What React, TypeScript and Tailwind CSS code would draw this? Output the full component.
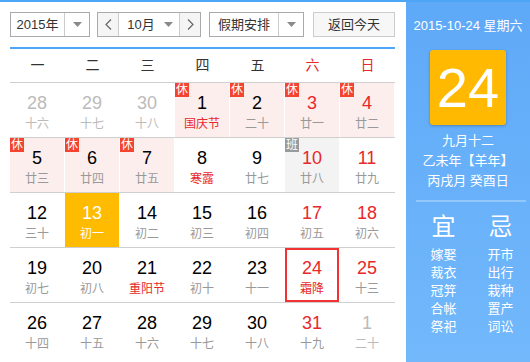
import React from "react";

type Day = {
  n: number;
  lunar: string;
  other?: boolean;
  weekend?: boolean;
  festival?: boolean;
  badge?: "休" | "班";
  today?: boolean;
  selected?: boolean;
};

const weeks: Day[][] = [
  [
    { n: 28, lunar: "十六", other: true },
    { n: 29, lunar: "十七", other: true },
    { n: 30, lunar: "十八", other: true },
    { n: 1, lunar: "国庆节", festival: true, badge: "休" },
    { n: 2, lunar: "二十", badge: "休" },
    { n: 3, lunar: "廿一", weekend: true, badge: "休" },
    { n: 4, lunar: "廿二", weekend: true, badge: "休" },
  ],
  [
    { n: 5, lunar: "廿三", badge: "休" },
    { n: 6, lunar: "廿四", badge: "休" },
    { n: 7, lunar: "廿五", badge: "休" },
    { n: 8, lunar: "寒露", festival: true },
    { n: 9, lunar: "廿七" },
    { n: 10, lunar: "廿八", weekend: true, badge: "班" },
    { n: 11, lunar: "廿九", weekend: true },
  ],
  [
    { n: 12, lunar: "三十" },
    { n: 13, lunar: "初一", today: true },
    { n: 14, lunar: "初二" },
    { n: 15, lunar: "初三" },
    { n: 16, lunar: "初四" },
    { n: 17, lunar: "初五", weekend: true },
    { n: 18, lunar: "初六", weekend: true },
  ],
  [
    { n: 19, lunar: "初七" },
    { n: 20, lunar: "初八" },
    { n: 21, lunar: "重阳节", festival: true },
    { n: 22, lunar: "初十" },
    { n: 23, lunar: "十一" },
    { n: 24, lunar: "霜降", weekend: true, festival: true, selected: true },
    { n: 25, lunar: "十三", weekend: true },
  ],
  [
    { n: 26, lunar: "十四" },
    { n: 27, lunar: "十五" },
    { n: 28, lunar: "十六" },
    { n: 29, lunar: "十七" },
    { n: 30, lunar: "十八" },
    { n: 31, lunar: "十九", weekend: true },
    { n: 1, lunar: "二十", other: true },
  ],
];

const yi = ["嫁娶", "裁衣", "冠笄", "合帐", "祭祀"];
const ji = ["开市", "出行", "栽种", "置产", "词讼"];

function Caret() {
  return (
    <svg width="9" height="5" viewBox="0 0 9 5">
      <path d="M0 0h9L4.5 5z" fill="#8a8a8a" />
    </svg>
  );
}

function Chevron({ dir }: { dir: "l" | "r" }) {
  return (
    <svg width="7" height="11" viewBox="0 0 7 11">
      <polyline
        points={dir === "l" ? "6,0.5 1,5.5 6,10.5" : "1,0.5 6,5.5 1,10.5"}
        fill="none"
        stroke="#666"
        strokeWidth="1.2"
      />
    </svg>
  );
}

function Cell({ d }: { d: Day }) {
  let bg = "";
  if (d.today) bg = "bg-[#ffbb00]";
  else if (d.badge === "休") bg = "bg-[#fdeeee]";
  else if (d.badge === "班") bg = "bg-[#f3f3f3]";

  let numColor = "text-[#000]";
  let lunarColor = "text-[#999]";
  if (d.other) {
    numColor = "text-[#bbb]";
    lunarColor = "text-[#bbb]";
  } else if (d.weekend) numColor = "text-[#e8282a]";
  if (d.festival) lunarColor = "text-[#e8282a]";
  if (d.today) {
    numColor = "text-white";
    lunarColor = "text-white";
  }

  return (
    <div className="w-[55px] h-[54px] pr-[1px]">
      <div
        className={`relative h-full flex flex-col items-center ${bg} ${
          d.selected ? "border-2 border-[#f33333] pt-[8px]" : "pt-[10px]"
        }`}
      >
        {d.badge && (
          <div
            className={`absolute top-0 left-0 w-[14px] h-[14px] text-[12px] leading-[14px] text-white text-center ${
              d.badge === "休" ? "bg-[#f4432f]" : "bg-[#9a9a9a]"
            }`}
          >
            {d.badge}
          </div>
        )}
        <div className={`text-[18px] leading-[20px] ${numColor}`}>{d.n}</div>
        <div className={`text-[12px] leading-[16px] mt-[3px] ${lunarColor}`}>{d.lunar}</div>
      </div>
    </div>
  );
}

export default function App() {
  return (
    <div
      className="w-[530px] h-[362px] flex border-t-2 border-[#4ea6f6] bg-white overflow-hidden"
      style={{ fontFamily: '"Liberation Sans", "Noto Sans CJK SC", sans-serif' }}
    >
      <div className="w-[406px] pl-[10px] pr-[11px]">
        {/* controls */}
        <div className="mt-[10px] h-[25px] flex text-[13px] text-[#333]">
          <div className="w-[80px] h-full flex border border-[#aaa]">
            <div className="w-[54px] flex items-center justify-center border-r border-[#ccc]">2015年</div>
            <div className="flex-1 flex items-center justify-center">
              <Caret />
            </div>
          </div>
          <div className="ml-[7px] w-[104px] h-full flex border border-[#aaa]">
            <div className="w-[21px] flex items-center justify-center bg-[#f5f5f5] border-r border-[#ccc]">
              <Chevron dir="l" />
            </div>
            <div className="flex-1 flex items-center justify-center gap-[9px] pl-[2px]">
              <span>10月</span>
              <Caret />
            </div>
            <div className="w-[21px] flex items-center justify-center bg-[#f5f5f5] border-l border-[#ccc]">
              <Chevron dir="r" />
            </div>
          </div>
          <div className="ml-[8px] w-[95px] h-full flex border border-[#aaa]">
            <div className="w-[69px] flex items-center justify-center border-r border-[#ccc]">假期安排</div>
            <div className="flex-1 flex items-center justify-center">
              <Caret />
            </div>
          </div>
          <div className="ml-[9px] w-[82px] h-full flex items-center justify-center border border-[#ccc] bg-[#f7f7f7]">
            返回今天
          </div>
        </div>

        <div className="mt-[10px] h-[2px] bg-[#4ea6f6]" />

        {/* week header */}
        <div className="h-[34px] grid grid-cols-7 border-b border-[#cfcfcf] text-[14px] text-[#333]">
          {["一", "二", "三", "四", "五", "六", "日"].map((w, i) => (
            <div
              key={w}
              className={`flex items-center justify-center ${i >= 5 ? "text-[#e8282a]" : ""}`}
            >
              {w}
            </div>
          ))}
        </div>

        {weeks.map((row, ri) => (
          <div
            key={ri}
            className={`flex ${ri < weeks.length - 1 ? "border-b border-[#cfcfcf]" : ""}`}
          >
            {row.map((d, ci) => (
              <Cell key={ci} d={d} />
            ))}
          </div>
        ))}
      </div>

      {/* side panel */}
      <div className="flex-1 flex flex-col items-center bg-gradient-to-b from-[#5ea9f8] to-[#72b8fb] text-white">
        <div className="mt-[16px] text-[13px] leading-[16px]">2015-10-24 星期六</div>
        <div className="mt-[16px] w-[76px] h-[75px] rounded-[3px] bg-[#ffb900] shadow-[0_1px_3px_rgba(0,0,0,0.25)] flex items-center justify-center text-[56px] leading-none">
          24
        </div>
        <div className="mt-[6px] text-[13px] leading-[20px] text-center">
          <div>九月十二</div>
          <div>乙未年【羊年】</div>
          <div>丙戌月 癸酉日</div>
        </div>
        <div className="mt-[9px] self-start ml-[10px] w-[110px] h-[2px] bg-[#93c8fc]" />
        <div className="mt-[11px] self-start ml-[9px] w-[114px] grid grid-cols-2">
          <div className="flex flex-col items-center">
            <div className="text-[24px] leading-[28px]">宜</div>
            <div className="mt-[5px] text-[13px] leading-[18px] text-center">
              {yi.map((t) => (
                <div key={t}>{t}</div>
              ))}
            </div>
          </div>
          <div className="flex flex-col items-center">
            <div className="text-[24px] leading-[28px]">忌</div>
            <div className="mt-[5px] text-[13px] leading-[18px] text-center">
              {ji.map((t) => (
                <div key={t}>{t}</div>
              ))}
            </div>
          </div>
        </div>
      </div>
    </div>
  );
}
